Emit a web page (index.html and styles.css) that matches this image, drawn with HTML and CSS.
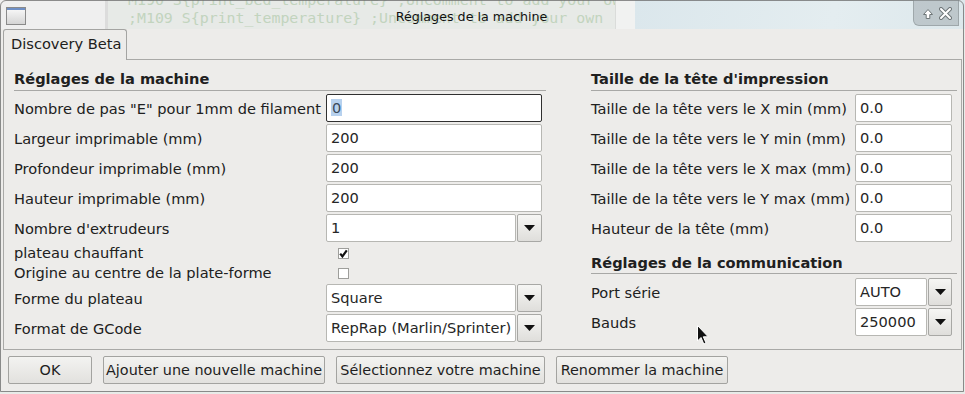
FILE: index.html
```html
<!DOCTYPE html>
<html lang="fr">
<head>
    <meta charset="UTF-8">
    <title>Réglages de la machine</title>
    <link rel="stylesheet" href="styles.css">
</head>
<body>
    <div class="backdrop">
        <div class="bd-top">
            <div class="bd-side"></div>
            <div class="bd-code">
                <div>M190 S{print_bed_temperature} ;Uncomment to add your own</div>
                <div>;M109 S{print_temperature} ;Uncomment to add your own</div>
            </div>
            <div class="bd-scroll"></div>
            <div class="bd-blue"></div>
        </div>
    </div>

    <div class="window">
        <div class="titlebar">
            <svg class="win-icon" width="20" height="18" viewBox="0 0 20 18">
                <defs>
                    <linearGradient id="ig" x1="0" y1="0" x2="0" y2="1">
                        <stop offset="0" stop-color="#fbfbfb"/>
                        <stop offset="1" stop-color="#d4d4d4"/>
                    </linearGradient>
                </defs>
                <rect x="0.5" y="0.5" width="19" height="17" fill="url(#ig)" stroke="#8a8a8a"/>
                <rect x="1" y="1" width="18" height="2" fill="#6f90c6"/>
            </svg>
            <div class="title">Réglages de la machine</div>
            <div class="win-buttons">
                <svg width="12" height="12" viewBox="0 0 12 12">
                    <path d="M6 1.5 L10.5 6.5 L7.8 6.5 L7.8 10.5 L4.2 10.5 L4.2 6.5 L1.5 6.5 Z" fill="#fff" stroke="#6f7779" stroke-width="1" stroke-linejoin="round"/>
                </svg>
                <svg width="13" height="13" viewBox="0 0 13 13">
                    <path d="M2 2 L11 11 M11 2 L2 11" stroke="#6f7779" stroke-width="4" stroke-linecap="round"/>
                    <path d="M2 2 L11 11 M11 2 L2 11" stroke="#fff" stroke-width="2" stroke-linecap="round"/>
                </svg>
            </div>
        </div>

        <div class="client">
            <div class="tabs">
                <div class="tab">Discovery Beta</div>
            </div>

            <div class="panel">
                <div class="col col-left">
                    <div class="heading">Réglages de la machine</div>
                    <div class="row">
                        <span class="label">Nombre de pas "E" pour 1mm de filament</span>
                        <div class="entry focused"><span class="selected">0</span></div>
                    </div>
                    <div class="row">
                        <span class="label">Largeur imprimable (mm)</span>
                        <div class="entry">200</div>
                    </div>
                    <div class="row">
                        <span class="label">Profondeur imprimable (mm)</span>
                        <div class="entry">200</div>
                    </div>
                    <div class="row">
                        <span class="label">Hauteur imprimable (mm)</span>
                        <div class="entry">200</div>
                    </div>
                    <div class="row">
                        <span class="label">Nombre d'extrudeurs</span>
                        <div class="combo">
                            <div class="entry">1</div>
                            <div class="drop"><svg width="11" height="6" viewBox="0 0 11 6"><path d="M0 0 H11 L5.5 6 Z" fill="#111"/></svg></div>
                        </div>
                    </div>
                    <div class="checks">
                        <div class="row check-row">
                            <span class="label">plateau chauffant</span>
                            <span class="checkbox"><svg width="9" height="9" viewBox="0 0 9 9"><path d="M1.2 4.6 L3.4 7.4 L7.8 1.4" fill="none" stroke="#111" stroke-width="2.2"/></svg></span>
                        </div>
                        <div class="row check-row">
                            <span class="label">Origine au centre de la plate-forme</span>
                            <span class="checkbox"></span>
                        </div>
                    </div>
                    <div class="row">
                        <span class="label">Forme du plateau</span>
                        <div class="combo">
                            <div class="entry">Square</div>
                            <div class="drop"><svg width="11" height="6" viewBox="0 0 11 6"><path d="M0 0 H11 L5.5 6 Z" fill="#111"/></svg></div>
                        </div>
                    </div>
                    <div class="row">
                        <span class="label">Format de GCode</span>
                        <div class="combo">
                            <div class="entry">RepRap (Marlin/Sprinter)</div>
                            <div class="drop"><svg width="11" height="6" viewBox="0 0 11 6"><path d="M0 0 H11 L5.5 6 Z" fill="#111"/></svg></div>
                        </div>
                    </div>
                </div>

                <div class="col col-right">
                    <div class="heading">Taille de la tête d'impression</div>
                    <div class="row">
                        <span class="label">Taille de la tête vers le X min (mm)</span>
                        <div class="entry">0.0</div>
                    </div>
                    <div class="row">
                        <span class="label">Taille de la tête vers le Y min (mm)</span>
                        <div class="entry">0.0</div>
                    </div>
                    <div class="row">
                        <span class="label">Taille de la tête vers le X max (mm)</span>
                        <div class="entry">0.0</div>
                    </div>
                    <div class="row">
                        <span class="label">Taille de la tête vers le Y max (mm)</span>
                        <div class="entry">0.0</div>
                    </div>
                    <div class="row">
                        <span class="label">Hauteur de la tête (mm)</span>
                        <div class="entry">0.0</div>
                    </div>
                    <div class="heading heading-comm">Réglages de la communication</div>
                    <div class="row">
                        <span class="label">Port série</span>
                        <div class="combo">
                            <div class="entry">AUTO</div>
                            <div class="drop"><svg width="11" height="6" viewBox="0 0 11 6"><path d="M0 0 H11 L5.5 6 Z" fill="#111"/></svg></div>
                        </div>
                    </div>
                    <div class="row">
                        <span class="label">Bauds</span>
                        <div class="combo">
                            <div class="entry">250000</div>
                            <div class="drop"><svg width="11" height="6" viewBox="0 0 11 6"><path d="M0 0 H11 L5.5 6 Z" fill="#111"/></svg></div>
                        </div>
                    </div>
                </div>
            </div>

            <div class="actions">
                <button class="btn btn-ok">OK</button>
                <button class="btn btn-add">Ajouter une nouvelle machine</button>
                <button class="btn btn-select">Sélectionnez votre machine</button>
                <button class="btn btn-rename">Renommer la machine</button>
            </div>
        </div>
    </div>

    <svg class="cursor" width="13" height="21" viewBox="0 0 13 21">
        <path d="M0.5 0.5 L0.5 16 L4 12.5 L6.8 19 L9 18 L6.3 11.8 L11.2 11.8 Z" fill="#111" stroke="#fff" stroke-width="1" stroke-linejoin="round"/>
    </svg>
</body>
</html>
```

FILE: styles.css
```css
* {
    box-sizing: border-box;
}

body {
    margin: 0;
    width: 965px;
    height: 394px;
    overflow: hidden;
    position: relative;
    background: #e9ece9;
    font-family: "DejaVu Sans", sans-serif;
    font-size: 14.6px;
    color: #202020;
}

/* desktop behind the window */
.backdrop {
    position: absolute;
    top: 0;
    left: 0;
    width: 965px;
    height: 394px;
    background: #e8ebe8;
}

.bd-top {
    display: flex;
    height: 29px;
}

.bd-side {
    width: 108px;
    background: #efefef;
    border-right: 3px solid #dcdcdc;
}

.bd-code {
    width: 507px;
    padding-left: 20px;
    background: #e7eae7;
    font-family: "DejaVu Sans Mono", monospace;
    font-size: 14.9px;
    line-height: 18.3px;
    color: #c2d4be;
    white-space: nowrap;
    overflow: hidden;
    margin-top: -9px;
}

.bd-scroll {
    width: 20px;
    background: #f1f2f1;
    border-left: 1px solid #dadcda;
}

.bd-blue {
    flex: 1;
    background: linear-gradient(100deg, #dbe7ec, #e4edf0 60%, #dde8ec);
}

/* window */
.window {
    position: relative;
    width: 964px;
    height: 392px;
    border: 1px solid rgba(105, 105, 105, 0.75);
    border-radius: 6px 6px 0 0;
    display: flex;
    flex-direction: column;
}

.titlebar {
    height: 28px;
    display: flex;
    align-items: flex-start;
}

.win-icon {
    margin: 6px 0 0 5px;
    flex: none;
}

.title {
    flex: 1;
    text-align: center;
    font-size: 12.7px;
    line-height: 16px;
    padding: 8px 0 0 4px;
    color: #111;
}

.win-buttons {
    width: 46px;
    height: 26px;
    margin: -1px 4px 0 0;
    display: flex;
    align-items: center;
    justify-content: space-around;
    padding: 2px 3px 0 5px;
    background: rgba(150, 160, 164, 0.45);
    border: 1px solid rgba(120, 128, 132, 0.45);
    border-top: none;
    border-radius: 0 0 0 6px;
}

.client {
    flex: 1;
    background: #edecea;
    padding: 0 1px 0 2px;
    display: flex;
    flex-direction: column;
}

.tabs {
    display: flex;
    height: 30px;
}

.tab {
    position: relative;
    z-index: 1;
    height: 31px;
    padding: 5px 5px 0 7px;
    line-height: 17px;
    background: #edecea;
    border: 1px solid #a4a4a2;
    border-bottom: none;
    border-radius: 3px 3px 0 0;
}

.panel {
    width: 959px;
    height: 291px;
    border: 1px solid #a9a9a7;
    display: grid;
    grid-template-columns: 532px 366px;
    column-gap: 45px;
    padding: 4px 4px 0 10px;
}

.col {
    display: flex;
    flex-direction: column;
    gap: 2px;
}

.heading {
    font-weight: bold;
    line-height: 17px;
    padding: 6px 0 3px;
    border-bottom: 1px solid #a8a8a6;
    margin-bottom: 1px;
    white-space: nowrap;
}

.heading-comm {
    padding-top: 10px;
    padding-bottom: 2px;
    margin-bottom: 2px;
}

.row {
    display: grid;
    grid-template-columns: 312px 216px;
    align-items: center;
    height: 28px;
}

.col-right .row {
    grid-template-columns: 264px 97px;
}

.label {
    white-space: nowrap;
    line-height: 17px;
}

.entry {
    height: 28px;
    background: #fff;
    border: 1px solid #b7b7b3;
    border-radius: 2px;
    padding: 0 4px;
    line-height: 26px;
    color: #262626;
    white-space: nowrap;
    overflow: hidden;
}

.entry.focused {
    border-color: #303030;
}

.selected {
    background: #b7d1ee;
    color: #3a4a5a;
    padding: 0 1px;
}

.combo {
    display: flex;
    gap: 1px;
}

.combo .entry {
    flex: 1;
    min-width: 0;
}

.drop {
    width: 25px;
    height: 28px;
    flex: none;
    display: flex;
    align-items: center;
    justify-content: center;
    border: 1px solid #a8a8a5;
    border-radius: 2px;
    background: linear-gradient(#f6f6f4, #dfdedb);
}

.col-right .drop {
    width: 24px;
}

.checks {
    margin: -1px 0;
}

.check-row {
    height: 20px;
}

.check-row .label {
    margin-bottom: 2px;
}

.checkbox {
    width: 11px;
    height: 11px;
    margin-left: 12px;
    background: #fff;
    border: 1px solid #9e9e9b;
    display: flex;
    align-items: center;
    justify-content: center;
}

.actions {
    display: flex;
    gap: 11px;
    margin: 6px 0 0 5px;
}

.btn {
    height: 28px;
    padding: 0 2px;
    font-family: "DejaVu Sans", sans-serif;
    font-size: 14.4px;
    color: #1e1e1e;
    background: linear-gradient(#f3f3f1, #e2e1de);
    border: 1px solid #a3a3a0;
    border-radius: 2px;
    white-space: nowrap;
}

.btn-ok { width: 84px; }
.btn-add { width: 222px; }
.btn-select { width: 209px; }
.btn-rename { width: 172px; }

.cursor {
    position: absolute;
    left: 697px;
    top: 325px;
}
```
